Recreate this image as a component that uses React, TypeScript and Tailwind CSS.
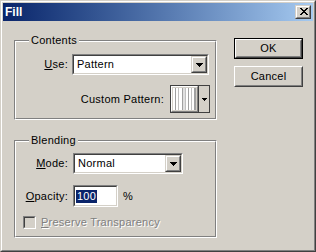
import React from "react";

const FONT = { fontFamily: '"Liberation Sans", Arial, sans-serif' };

function Sunken({ className = "", innerClass = "", children }: { className?: string; innerClass?: string; children?: React.ReactNode }) {
  return (
    <div className={`border border-t-[#808080] border-l-[#808080] border-r-white border-b-white ${className}`}>
      <div className={`h-full border border-t-[#404040] border-l-[#404040] border-r-[#D4D0C8] border-b-[#D4D0C8] ${innerClass}`}>
        {children}
      </div>
    </div>
  );
}

function Raised({ className = "", innerClass = "", children }: { className?: string; innerClass?: string; children?: React.ReactNode }) {
  return (
    <div className={`border border-t-[#D4D0C8] border-l-[#D4D0C8] border-r-[#404040] border-b-[#404040] bg-[#D4D0C8] ${className}`}>
      <div className={`h-full border border-t-white border-l-white border-r-[#808080] border-b-[#808080] ${innerClass}`}>
        {children}
      </div>
    </div>
  );
}

function DownArrow() {
  return (
    <svg width="7" height="4" viewBox="0 0 7 4" shapeRendering="crispEdges">
      <path d="M0 0h7v1H0z M1 1h5v1H1z M2 2h3v1H2z M3 3h1v1H3z" fill="#000" />
    </svg>
  );
}

function Combo({ w, text }: { w: string; text: string }) {
  return (
    <Sunken className={`${w} h-[21px]`} innerClass="bg-white flex items-center">
      <span className="flex-1 pl-[3px] leading-none">{text}</span>
      <Raised className="w-[16px] h-full" innerClass="flex items-center justify-center pl-[1px]">
        <DownArrow />
      </Raised>
    </Sunken>
  );
}

function GroupBox({ label, className = "", children }: { label: string; className?: string; children?: React.ReactNode }) {
  return (
    <div className={`relative border border-t-[#808080] border-l-[#808080] border-r-white border-b-white ${className}`}>
      <div className="h-full border border-t-white border-l-white border-r-[#808080] border-b-[#808080] flex flex-col">
        {children}
      </div>
      <span className="absolute left-[14px] -top-[7px] px-[2px] bg-[#D4D0C8] leading-[13px]">{label}</span>
    </div>
  );
}

function PatternSwatch() {
  const stripes = [
    { x: 0, c: "#ffffff" },
    { x: 2, c: "#a0a0a0" },
    { x: 3, c: "#ffffff" },
    { x: 5, c: "#c0c0c0" },
    { x: 6, c: "#ffffff" },
    { x: 9, c: "#a0a0a0" },
    { x: 10, c: "#e0e0e0" },
    { x: 12, c: "#c0c0c0" },
    { x: 13, c: "#ffffff" },
    { x: 15, c: "#a0a0a0" },
    { x: 16, c: "#ffffff" },
    { x: 18, c: "#c0c0c0" },
    { x: 19, c: "#ffffff" },
    { x: 21, c: "#a0a0a0" },
  ];
  return (
    <div className="ml-[6px] w-[40px] h-[28px] border border-[#404040] bg-[#D4D0C8] flex">
      <div className="w-[27px] h-full border border-t-white border-l-white border-r-[#808080] border-b-[#808080] p-[1px]">
        <svg width="23" height="22" viewBox="0 0 23 22" shapeRendering="crispEdges" className="block">
          <rect x="0" y="0" width="23" height="22" fill="#ffffff" />
          {stripes.map((s, i) => (
            <rect key={i} x={s.x} y="0" width={(stripes[i + 1]?.x ?? 23) - s.x} height="22" fill={s.c} />
          ))}
        </svg>
      </div>
      <div className="w-px h-full bg-[#404040]" />
      <div className="flex-1 flex items-center justify-center">
        <svg width="5" height="3" viewBox="0 0 5 3" shapeRendering="crispEdges">
          <path d="M0 0h5v1H0z M1 1h3v1H1z M2 2h1v1H2z" fill="#000" />
        </svg>
      </div>
    </div>
  );
}

function CloseButton() {
  return (
    <Raised className="w-[16px] h-[14px]" innerClass="flex items-start justify-start pl-[3px] pt-[1px]">
      <svg width="8" height="7" viewBox="0 0 8 7" shapeRendering="crispEdges" className="block">
        <path
          d="M0 0h2v1H0z M6 0h2v1H6z M1 1h2v1H1z M5 1h2v1H5z M2 2h4v1H2z M3 3h2v1H3z M2 4h4v1H2z M1 5h2v1H1z M5 5h2v1H5z M0 6h2v1H0z M6 6h2v1H6z"
          fill="#000"
        />
      </svg>
    </Raised>
  );
}

function PushButton({ label, isDefault }: { label: string; isDefault?: boolean }) {
  const face = (
    <div className="h-full border border-t-white border-l-white border-r-[#404040] border-b-[#404040]">
      <div className="h-full border border-t-[#D4D0C8] border-l-[#D4D0C8] border-r-[#808080] border-b-[#808080] flex items-center justify-center leading-none">
        {label}
      </div>
    </div>
  );
  return isDefault ? (
    <div className="w-[69px] h-[21px] border border-black">{face}</div>
  ) : (
    <div className="w-[69px] h-[21px]">{face}</div>
  );
}

export default function App() {
  return (
    <div
      className="w-[316px] h-[252px] bg-[#D4D0C8] border border-t-[#D4D0C8] border-l-[#D4D0C8] border-r-[#404040] border-b-[#404040] text-[11px] tracking-[0.25px] text-black select-none"
      style={FONT}
    >
      <div className="h-full border border-t-white border-l-white border-r-[#808080] border-b-[#808080] p-px flex flex-col">
        <div className="h-[18px] flex items-center justify-between pl-[2px] pr-[2px] bg-linear-to-r from-[#0A246A] to-[#A6CAF0]">
          <span className="text-white font-bold text-[12px] tracking-normal leading-none">Fill</span>
          <CloseButton />
        </div>
        <div className="flex flex-1 pl-[11px] pt-[17px]">
          <div className="w-[203px] mt-[2px] flex flex-col">
            <GroupBox label="Contents" className="h-[80px]">
              <div className="flex items-center mt-[12px] h-[21px]">
                <div className="w-[52px] text-right leading-none">
                  <u>U</u>se:
                </div>
                <div className="ml-[4px]">
                  <Combo w="w-[137px]" text="Pattern" />
                </div>
              </div>
              <div className="flex items-center justify-end mt-[10px] pr-[5px] h-[28px]">
                <span className="leading-none">Custom Pattern:</span>
                <PatternSwatch />
              </div>
            </GroupBox>
            <GroupBox label="Blending" className="h-[98px] mt-[20px]">
              <div className="flex items-center mt-[11px] h-[21px]">
                <div className="w-[52px] text-right leading-none">
                  <u>M</u>ode:
                </div>
                <div className="ml-[5px]">
                  <Combo w="w-[110px]" text="Normal" />
                </div>
              </div>
              <div className="flex items-center mt-[11px] h-[22px]">
                <div className="w-[52px] text-right leading-none">
                  <u>O</u>pacity:
                </div>
                <Sunken className="ml-[5px] w-[45px] h-[22px]" innerClass="bg-white flex items-center pl-px">
                  <span className="bg-[#0A246A] text-white px-px leading-[13px]">100</span>
                </Sunken>
                <span className="ml-[5px] leading-none">%</span>
              </div>
              <div className="flex items-center mt-[9px] h-[13px] pl-[7px]">
                <Sunken className="w-[13px] h-[13px]" innerClass="bg-[#D4D0C8]" />
                <span className="ml-[5px] leading-none text-[#808080] [text-shadow:1px_1px_0_#ffffff]">
                  <u>P</u>reserve Transparency
                </span>
              </div>
            </GroupBox>
          </div>
          <div className="ml-[17px] flex flex-col gap-[7px]">
            <PushButton label="OK" isDefault />
            <PushButton label="Cancel" />
          </div>
        </div>
      </div>
    </div>
  );
}
